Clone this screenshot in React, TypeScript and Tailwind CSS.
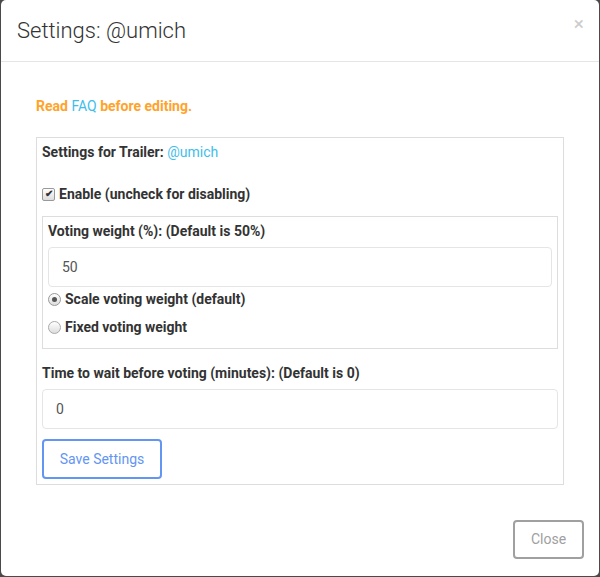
export default function App() {
  return (
    <div className="min-h-screen bg-[#4a4a4a] pl-px font-['Roboto','Liberation_Sans',sans-serif] text-[14px] text-[#333]">
      <div className="w-[598px] h-[576px] bg-white rounded-[5px] flex flex-col">
        {/* header */}
        <div className="flex items-start justify-between h-[62px] border-b border-[#e5e5e5] pl-[16px] pr-[15px] pt-[15px]">
          <h4 className="text-[22px] font-light leading-[31px] text-[#333]">Settings: @umich</h4>
          <button type="button" className="text-[19px] leading-[19px] text-[#ccc] -mt-[1px]">
            ×
          </button>
        </div>

        {/* body */}
        <div className="px-[35px] pt-[34px] flex-1">
          <p className="font-bold text-[#ffa32b] leading-[20px]">
            Read <a className="font-normal text-[#3ebeeb]">FAQ</a> before editing.
          </p>

          <div className="mt-[21px] border border-[#ddd] px-[5px] pt-[4px] pb-[5px]">
            <div className="leading-[20px]">
              <span className="font-bold">Settings for Trailer:</span>{" "}
              <a className="text-[#3ebeeb]">@umich</a>
            </div>

            <label className="mt-[22px] flex items-center gap-[4px] leading-[20px] font-bold">
              <span className="w-[13px] h-[13px] rounded-[2px] border border-[#999] bg-gradient-to-b from-[#fff] to-[#ddd] flex items-center justify-center text-[10px] leading-none text-[#333]">
                ✔
              </span>
              Enable (uncheck for disabling)
            </label>

            <div className="mt-[12px] border border-[#ddd] px-[5px] pt-[4px] pb-[11px]">
              <div className="font-bold leading-[20px]">Voting weight (%): (Default is 50%)</div>
              <div className="mt-[6px] h-[40px] border border-[#e5e5e5] rounded-[4px] flex items-center pl-[13px] text-[#555]">
                50
              </div>
              <label className="mt-[2px] flex items-center gap-[4px] leading-[20px] font-bold">
                <span className="w-[13px] h-[13px] rounded-full border border-[#999] bg-gradient-to-b from-[#fff] to-[#ddd] flex items-center justify-center">
                  <span className="w-[5px] h-[5px] rounded-full bg-[#555]" />
                </span>
                Scale voting weight (default)
              </label>
              <label className="mt-[8px] flex items-center gap-[4px] leading-[20px] font-bold">
                <span className="w-[13px] h-[13px] rounded-full border border-[#aaa] bg-gradient-to-b from-[#fff] to-[#ddd]" />
                Fixed voting weight
              </label>
            </div>

            <div className="mt-[14px] font-bold leading-[20px]">
              Time to wait before voting (minutes): (Default is 0)
            </div>
            <div className="mt-[6px] h-[40px] border border-[#e5e5e5] rounded-[4px] flex items-center pl-[13px] text-[#555]">
              0
            </div>
            <button
              type="button"
              className="mt-[10px] h-[40px] w-[120px] border-2 border-[#6395f2] rounded-[4px] text-[#6395f2]"
            >
              Save Settings
            </button>
          </div>
        </div>

        {/* footer */}
        <div className="flex justify-end pr-[15px] pb-[17px]">
          <button
            type="button"
            className="h-[39px] w-[71px] border-2 border-[#a0a0a0] rounded-[4px] text-[#a0a0a0]"
          >
            Close
          </button>
        </div>
      </div>
    </div>
  );
}
